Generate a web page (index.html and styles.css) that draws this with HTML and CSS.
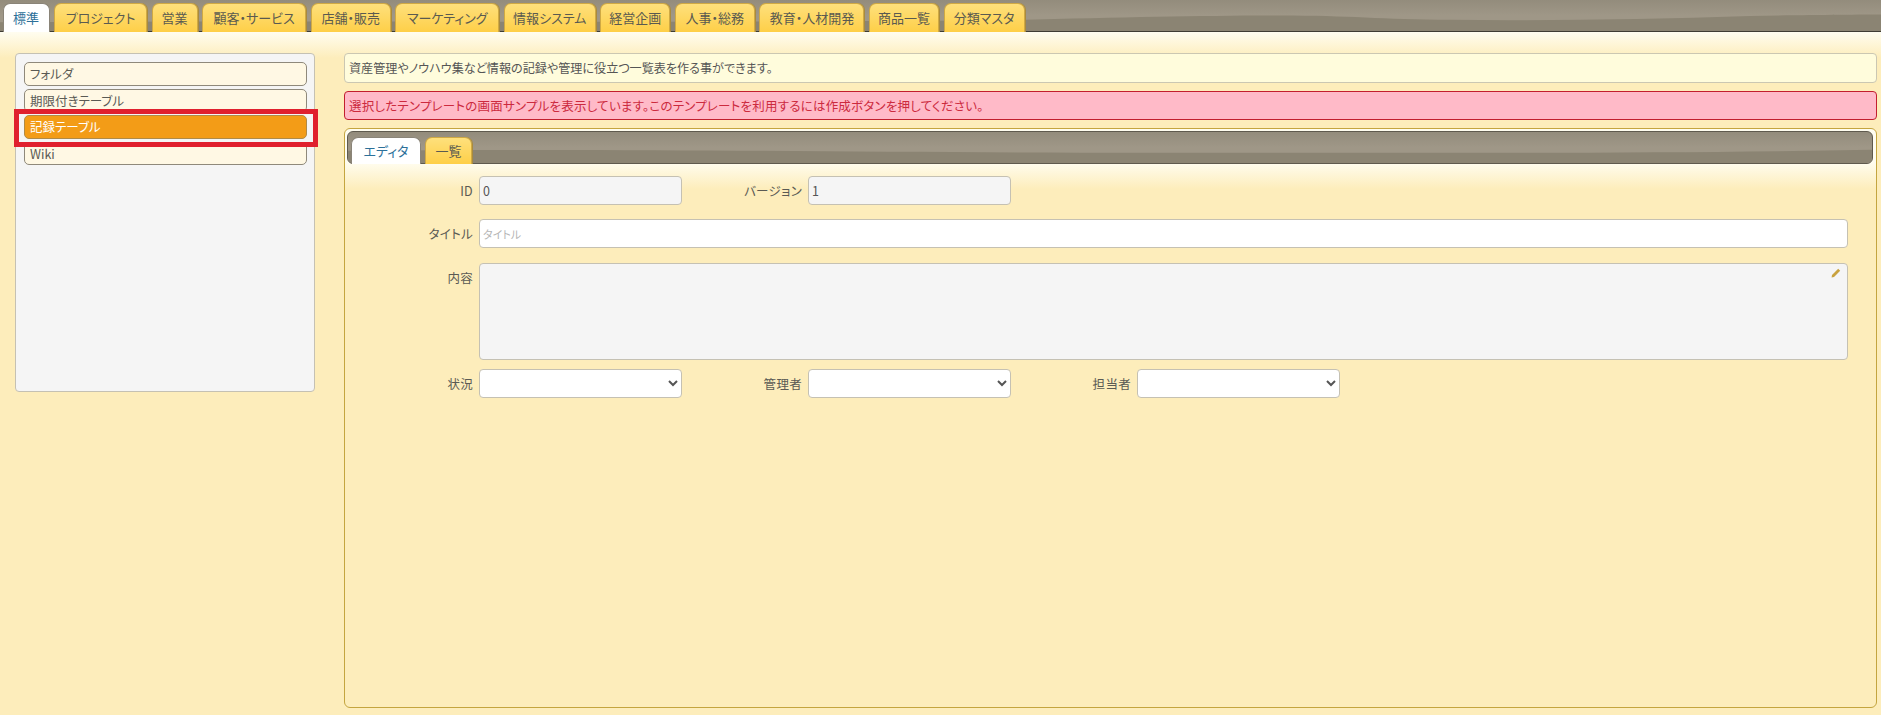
FILE: index.html
```html
<!DOCTYPE html>
<html lang="ja">
<head>
<meta charset="utf-8">
<title>テンプレート</title>
<link rel="stylesheet" href="styles.css">
</head>
<body>
<nav class="tabbar">
  <svg class="wave" viewBox="0 0 1881 32" preserveAspectRatio="none" aria-hidden="true"><path d="M0 23C300 21 600 24 1000 21C1120 18 1200 16 1280 16C1350 16 1380 20 1450 20.500C1550 21.500 1650 20 1750 16.500C1800 15.500 1860 15 1881 15V32H0Z"/></svg>
  <a class="tab active w47">標準</a>
  <a class="tab w93">プロジェクト</a>
  <a class="tab w46">営業</a>
  <a class="tab w104">顧客・サービス</a>
  <a class="tab w80">店舗・販売</a>
  <a class="tab w104">マーケティング</a>
  <a class="tab w92">情報システム</a>
  <a class="tab w70">経営企画</a>
  <a class="tab w80">人事・総務</a>
  <a class="tab w105">教育・人材開発</a>
  <a class="tab w70">商品一覧</a>
  <a class="tab w81">分類マスタ</a>
</nav>
<main class="page">
  <aside class="side">
    <div class="item">フォルダ</div>
    <div class="item">期限付きテーブル</div>
    <div class="item selected">記録テーブル</div>
    <div class="item">Wiki</div>
    <div class="highlight"></div>
  </aside>
  <section class="content">
    <p class="msg">資産管理やノウハウ集など情報の記録や管理に役立つ一覧表を作る事ができます。</p>
    <p class="msg alert">選択したテンプレートの画面サンプルを表示しています。このテンプレートを利用するには作成ボタンを押してください。</p>
    <div class="panel">
      <div class="tabbar inner">
        <svg class="wave" viewBox="0 0 1526 33" preserveAspectRatio="none" aria-hidden="true"><path d="M0 20C300 17 500 22 800 22C1100 22 1300 23 1526 19V33H0Z"/></svg>
        <a class="tab active w70">エディタ</a>
        <a class="tab w47">一覧</a>
      </div>
      <form class="form">
        <div class="row r1">
          <div class="field"><label>ID</label><input class="ctl ro" value="0" readonly></div>
          <div class="field"><label>バージョン</label><input class="ctl ro" value="1" readonly></div>
        </div>
        <div class="row r2">
          <div class="field grow"><label>タイトル</label><input class="ctl" placeholder="タイトル"></div>
        </div>
        <div class="row r3">
          <div class="field grow top"><label>内容</label>
            <div class="area"><svg class="pen" viewBox="0 0 10 10" aria-hidden="true"><path d="M7.2.8l2 2L3 9 .6 9.5 1 7z"/></svg></div>
          </div>
        </div>
        <div class="row r4">
          <div class="field"><label>状況</label><select class="ctl sel"><option></option></select></div>
          <div class="field"><label>管理者</label><select class="ctl sel"><option></option></select></div>
          <div class="field"><label>担当者</label><select class="ctl sel"><option></option></select></div>
        </div>
      </form>
    </div>
  </section>
</main>
</body>
</html>
```
FILE: styles.css
```css
* { box-sizing: border-box; }
html, body { height: 100%; }
body {
  margin: 0;
  height: 715px;
  overflow: hidden;
  background: #fdedbb;
  color: #555;
  font: 12.5px/1.2 "Noto Sans CJK JP", "Noto Sans", sans-serif;
  font-feature-settings: "palt";
}
.tabbar {
  position: relative;
  display: flex;
  gap: 4.55px;
  height: 32px;
  padding: 3px 0 0 2.5px;
  background: linear-gradient(#938c7c, #9f9787 50%);
  border-bottom: 1px solid #3f3c33;
}
.wave { position: absolute; left: 0; top: 0; width: 100%; height: 100%; }
.wave path { fill: #8b8473; }
.tab {
  position: relative;
  display: flex;
  align-items: center;
  justify-content: center;
  height: 29px;
  margin-bottom: -1px;
  border: 1px solid #cfa944;
  border-bottom: 0;
  border-radius: 7px 7px 0 0;
  background: linear-gradient(#fee07c, #fecf48);
  color: #5a5a50;
  font-size: 13px;
  box-shadow: 1px 0 0 #a88a3e;
}
.tab.active {
  background: #fff;
  border-color: #8a8478;
  color: #2c7099;
  box-shadow: none;
  z-index: 1;
}
.w46 { width: 46px; } .w47 { width: 47px; } .w70 { width: 70px; }
.w80 { width: 80px; } .w81 { width: 81px; } .w92 { width: 92px; }
.w93 { width: 93px; } .w104 { width: 104px; } .w105 { width: 105px; }
.page {
  display: flex;
  gap: 29px;
  height: 683px;
  padding: 21px 4px 7px 15px;
  background: linear-gradient(#fffdf0, #fdedbb 26px);
  background-repeat: no-repeat;
}
.side {
  position: relative;
  flex: none;
  width: 300px;
  height: 339px;
  padding: 8px 7px 0 8px;
  background: #f5f5f5;
  border: 1px solid #c5c1b3;
  border-radius: 4px;
}
.item {
  height: 23.6px;
  margin-bottom: 3px;
  padding: 0 5px;
  display: flex;
  align-items: center;
  background: #fff8e4;
  border: 1px solid #8f897b;
  border-radius: 5px;
  color: #5a5a54;
}
.item.selected {
  background: #f39c17;
  border-color: #b08a46;
  color: #fff;
}
.highlight {
  position: absolute;
  left: -2px;
  top: 55px;
  width: 304px;
  height: 38px;
  border: 5px solid #e0202e;
}
.content { flex: 1; min-width: 0; display: flex; flex-direction: column; }
.msg {
  height: 30px;
  margin: 0 0 8px;
  padding: 0 5px 0 4px;
  display: flex;
  align-items: center;
  font-size: 12.1px;
  background: #fffcdc;
  border: 1px solid #cbc7b2;
  border-radius: 4px;
  color: #555;
}
.msg.alert {
  height: 29px;
  font-size: 12.5px;
  letter-spacing: .22px;
  background: #ffbac8;
  border-color: #c21f2e;
  color: #cc2a3e;
}
.panel {
  flex: 1;
  padding: 2px 3px 2px 2px;
  border: 1px solid #c4a53f;
  border-radius: 6px;
  background: linear-gradient(#fffdf0 33px, #fdedbb 60px);
}
.tabbar.inner {
  height: 33px;
  gap: 4px;
  padding: 5px 0 0 3px;
  border: 1px solid #5f5a4e;
  border-radius: 6px;
}
.tabbar.inner .wave { border-radius: 5px; }
.tabbar.inner .tab { height: 27px; }
.form { padding: 12px 0 0 6px; display: flex; flex-direction: column; }
.row { display: flex; }
.r1 { margin-bottom: 14px; }
.r2 { margin-bottom: 15px; }
.r3 { margin-bottom: 9px; }
.field { display: flex; align-items: center; gap: 6px; width: 329px; }
.field.grow { width: 1494px; }
.field.top { align-items: flex-start; }
.field label { width: 120px; flex: none; text-align: right; letter-spacing: .3px; color: #5a5a54; }
.field.top label { padding-top: 7px; }
.ctl {
  flex: none;
  width: 203px;
  height: 29px;
  padding: 0 3px;
  background: #fff;
  border: 1px solid #c5c1b3;
  border-radius: 4px;
  font: 12.5px "Noto Sans CJK JP", sans-serif;
  color: #555;
  outline: none;
}
.ctl::placeholder { color: #b5b5b5; font-size: 11px; font-feature-settings: "palt"; }
.ro { background: #f5f5f5; }
.grow .ctl { width: 1369px; }
.sel { height: 29px; }
.area {
  position: relative;
  flex: none;
  width: 1369px;
  height: 97px;
  background: #f5f5f5;
  border: 1px solid #c5c1b3;
  border-radius: 4px;
}
.pen { position: absolute; right: 6px; top: 4px; width: 10px; height: 10px; }
.pen path { fill: #c9a23e; }
```
